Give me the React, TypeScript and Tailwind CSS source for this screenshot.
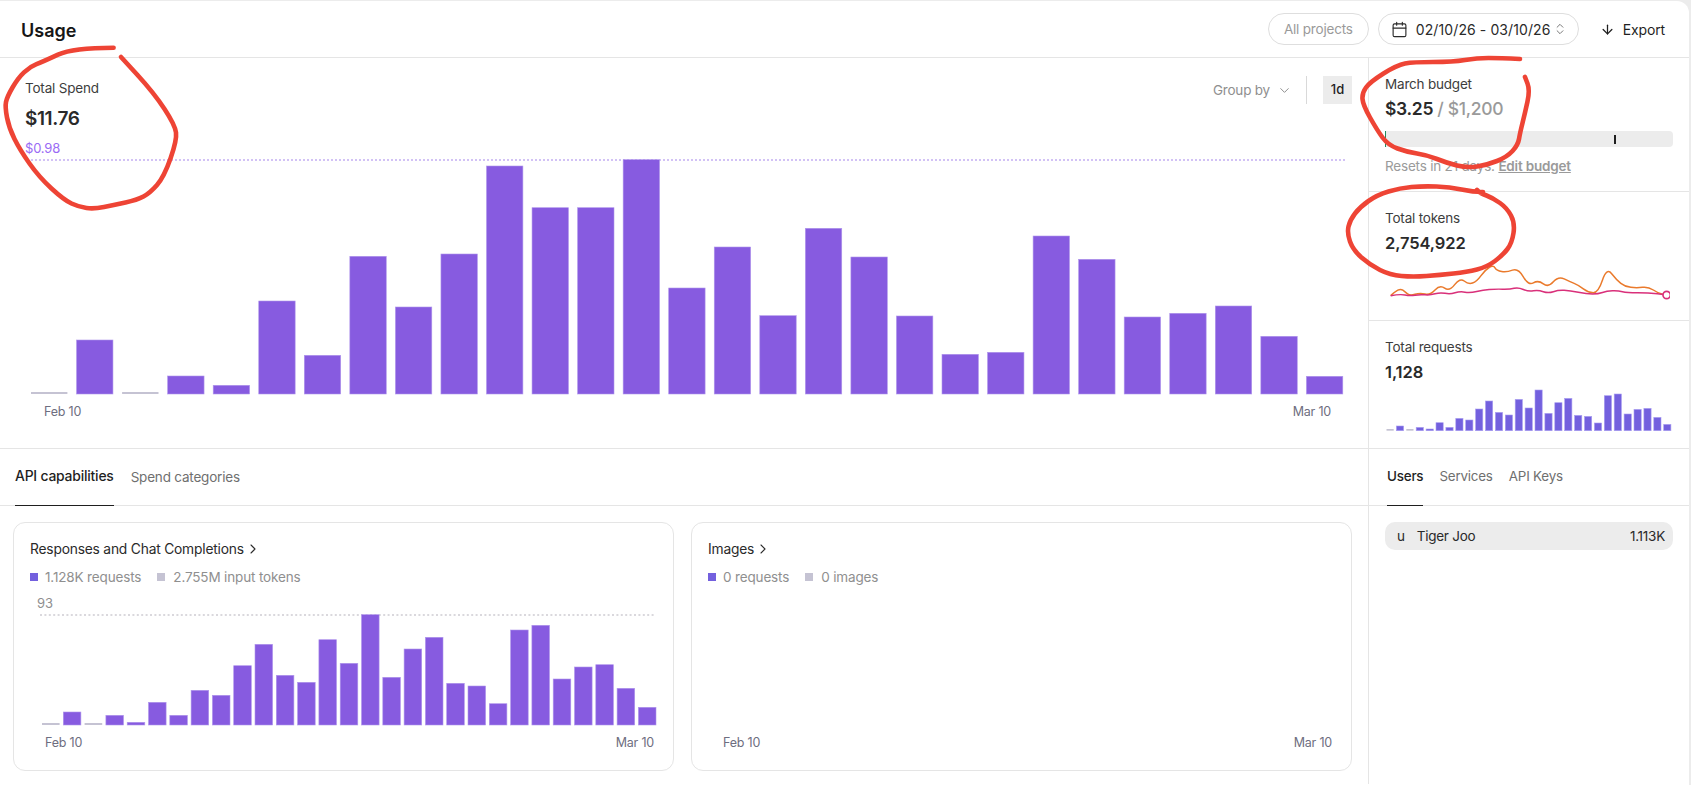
import { ArrowDown, Calendar, ChevronDown, ChevronRight, ChevronsUpDown } from "lucide-react";

const spendBars = [2, 54, 2, 18, 8.7, 93, 38.7, 137.7, 87, 140, 228, 186.3, 186.3, 234.3, 106, 147, 78.3, 165.7, 137, 78, 39.7, 41.7, 158, 134.7, 77, 80.7, 88, 57.7, 17.7];
const cardBars = [2, 13, 2, 9.7, 2.7, 22.7, 9.7, 34.7, 29.7, 59.3, 80.7, 49.7, 42.7, 85.3, 61.7, 110.3, 47.7, 76, 87.7, 41.7, 39, 21.3, 95, 99.7, 46, 58, 60.3, 36.7, 17.7];
const requestBars = [1.7, 4.7, 1.7, 3.3, 1.7, 8, 3.3, 12.3, 10.7, 21.7, 29.7, 18.3, 15.7, 31.3, 22.7, 40.7, 17.3, 28, 32.3, 15.3, 14.3, 7.7, 35, 36.7, 16.7, 21.3, 22.3, 13.3, 6.3];

const orangeLine: [number, number][] = [[152, 347], [165, 335], [182, 326], [195, 335], [210, 348], [240, 338], [270, 346], [300, 314], [328, 335], [360, 293], [385, 313], [410, 305], [435, 270], [460, 255], [470, 272], [500, 277], [535, 264], [565, 317], [595, 300], [625, 323], [655, 288], [690, 305], [715, 315], [745, 338], [775, 338], [800, 262], [830, 300], [855, 320], [890, 324], [925, 320], [955, 340], [980, 345]];
const pinkLine: [number, number][] = [[152, 347], [180, 342], [210, 348], [240, 343], [270, 346], [300, 337], [330, 343], [360, 334], [390, 339], [430, 330], [465, 327], [510, 328], [535, 322], [565, 335], [595, 330], [625, 340], [655, 330], [690, 332], [740, 342], [775, 342], [800, 333], [835, 332], [860, 338], [925, 338], [980, 345]];

// red pen marks on top of the screenshot, in page coordinates
const penSpend: [number, number][] = [[113.6, 47.7], [73, 47.7], [43, 61.7], [30, 66.7], [18, 78], [7, 97], [5, 107], [9, 128], [20, 150], [39, 177], [64, 200], [79, 207], [94, 209], [114, 205], [137, 200], [150, 193], [164, 177], [177, 140], [175, 125], [154, 93], [121, 57]];
const penBudget: [number, number][] = [[1520, 59], [1500, 58], [1477, 58], [1453, 62], [1413, 62], [1397, 65], [1370, 82], [1362, 93], [1363, 105], [1377, 130], [1388, 145], [1407, 152], [1427, 155], [1447, 163], [1467, 168], [1487, 165], [1507, 157], [1518, 145], [1520, 133], [1525, 113], [1530, 90], [1525, 77]];
const penTokens: [number, number][] = [[1483, 192], [1473, 192], [1450, 187], [1423, 186], [1400, 188], [1377, 195], [1360, 207], [1350, 220], [1347, 233], [1353, 250], [1370, 265], [1390, 275], [1413, 277], [1440, 275], [1467, 272], [1487, 267], [1503, 255], [1512, 243], [1515, 223], [1507, 208], [1493, 198], [1480, 193], [1477, 190]];

function smooth(points: [number, number][]) {
  let d = `M${points[0][0]} ${points[0][1]}`;
  for (let i = 1; i < points.length - 1; i++) {
    const mx = (points[i][0] + points[i + 1][0]) / 2;
    const my = (points[i][1] + points[i + 1][1]) / 2;
    d += ` Q${points[i][0]} ${points[i][1]} ${mx} ${my}`;
  }
  const last = points[points.length - 1];
  return `${d} L${last[0]} ${last[1]}`;
}

type BarsProps = {
  values: number[];
  x0: number;
  pitch: number;
  barWidth: number;
  baseline: number;
  color: string;
  edge: string;
};

function Bars({ values, x0, pitch, barWidth, baseline, color, edge }: BarsProps) {
  return (
    <>
      {values.map((v, i) => {
        const empty = i === 0 || i === 2;
        return (
          <rect
            key={i}
            x={x0 + i * pitch}
            y={baseline - v}
            width={barWidth}
            height={v}
            fill={empty ? "#c5c3d3" : color}
            stroke={empty ? "none" : edge}
            strokeWidth="0.6"
          />
        );
      })}
    </>
  );
}

function Legend({ first, second }: { first: string; second: string }) {
  return (
    <div className="mt-[10px] flex h-[18px] items-center text-[13.5px] tracking-[-0.15px] text-[#8f8f8f]">
      <span className="h-2 w-2 bg-[#7360de]" />
      <span className="ml-[7px]">{first}</span>
      <span className="ml-4 h-2 w-2 bg-[#c5c3d3]" />
      <span className="ml-2">{second}</span>
    </div>
  );
}

function CapabilityCard({ title, first, second, chart }: { title: string; first: string; second: string; chart?: boolean }) {
  return (
    <div className="h-[249px] w-[661px] rounded-xl border border-[#e5e5e5] px-4 pt-[17px]">
      <div className="flex h-[18px] items-center text-[13.8px] tracking-[-0.2px] text-[#2a2a2a]">
        {title}
        <ChevronRight className="ml-px h-4 w-4" strokeWidth={1.6} />
      </div>
      <Legend first={first} second={second} />
      <div className="mt-[9px] h-4 pl-[7px] text-[13px] leading-4 text-[#8f8f8f]">{chart ? "93" : ""}</div>
      <svg className="mt-[3px] block" width="630" height="112" viewBox="0 0 630 112">
        {chart && (
          <>
            <line x1="10" y1="1" x2="625" y2="1" stroke="#b5b2bb" strokeWidth="1.2" strokeDasharray="2 2.4" />
            <Bars values={cardBars} x0={12} pitch={21.3} barWidth={17.6} baseline={111} color="#875be0" edge="#b096ec" />
          </>
        )}
      </svg>
      <div className="mt-[9px] flex h-4 w-[630px] justify-between pl-[15px] pr-[6px] text-[12.5px] leading-4 tracking-[-0.2px] text-[#6e6e80]">
        <span>Feb 10</span>
        <span>Mar 10</span>
      </div>
    </div>
  );
}

function Tab({ label, active }: { label: string; active?: boolean }) {
  return (
    <div
      className={`-mb-px flex h-[57px] items-center border-b pb-px text-[13.4px] tracking-[-0.2px] ${
        active ? "border-[#1f1f1f] font-medium text-[#1f1f1f]" : "border-transparent text-[#6f6f6f]"
      }`}
    >
      {label}
    </div>
  );
}

export default function App() {
  return (
    <div className="relative h-[785px] w-[1691px] overflow-hidden bg-[#ececec] pr-[2px] pt-px font-['Inter',sans-serif]">
      <div className="h-[784px] rounded-tr-xl bg-white">
        {/* Header */}
        <div className="flex h-[57px] items-center justify-between border-b border-[#e5e5e5] pl-[21px] pr-6">
          <h1 className="pt-0.5 text-[18px] font-semibold text-[#161616]">Usage</h1>
          <div className="flex items-center">
            <div className="flex h-8 w-[101px] items-center justify-center rounded-full border border-[#dedede] text-[13.5px] tracking-[-0.2px] text-[#9a9a9a]">
              All projects
            </div>
            <div className="ml-[9px] flex h-8 w-[201px] items-center rounded-full border border-[#dedede] pl-[12px] text-[14px] tracking-[0.1px] text-[#2a2a2a]">
              <Calendar className="h-[17px] w-[17px]" strokeWidth={1.6} />
              <span className="ml-[8px]">02/10/26 - 03/10/26</span>
              <ChevronsUpDown className="ml-[2px] h-[14px] w-[14px] text-[#6f6f6f]" strokeWidth={1.6} />
            </div>
            <ArrowDown className="ml-[21px] h-[15px] w-[15px] text-[#1f1f1f]" strokeWidth={2} />
            <span className="ml-[8px] text-[14px] tracking-[-0.15px] text-[#1f1f1f]">Export</span>
          </div>
        </div>

        {/* Top row */}
        <div className="flex h-[391px] border-b border-[#e5e5e5]">
          <div className="w-[1369px] border-r border-[#e5e5e5]">
            <div className="flex items-start justify-between pl-[25px] pr-4 pt-[18px]">
              <div className="pt-[3px]">
                <div className="text-[13.5px] leading-[18px] tracking-[-0.2px] text-[#3d3d3d]">Total Spend</div>
                <div className="mt-2 text-[19px] font-semibold leading-7 tracking-[-0.4px] text-[#2a2a2a]">$11.76</div>
                <div className="mt-[7px] text-[13px] leading-4 tracking-[-0.2px] text-[#9a6bf5]">$0.98</div>
              </div>
              <div className="flex h-7 items-center">
                <span className="text-[13.5px] tracking-[-0.2px] text-[#8f8f8f]">Group by</span>
                <ChevronDown className="ml-[7px] h-[15px] w-[15px] text-[#8f8f8f]" strokeWidth={1.6} />
                <span className="ml-[14px] h-7 w-px bg-[#d9d9d9]" />
                <span className="ml-4 flex h-7 w-[29px] items-center justify-center bg-[#ececec] text-[13px] font-medium text-[#1f1f1f]">1d</span>
              </div>
            </div>
            <svg className="ml-[25px] mt-[3px] block" width="1325" height="236" viewBox="0 0 1325 236">
              <line x1="6" y1="1" x2="1322" y2="1" stroke="#c3aef2" strokeWidth="1.4" strokeDasharray="2 2" />
              <Bars values={spendBars} x0={6} pitch={45.55} barWidth={36.4} baseline={235} color="#875be0" edge="#b096ec" />
            </svg>
            <div className="mt-[9px] flex h-4 justify-between pl-11 pr-[37px] text-[12.5px] leading-4 tracking-[-0.2px] text-[#6e6e80]">
              <span>Feb 10</span>
              <span>Mar 10</span>
            </div>
          </div>

          {/* Side stats */}
          <div className="w-[320px]">
            <div className="h-[134px] border-b border-[#e5e5e5] px-4 pt-[17px]">
              <div className="text-[13.5px] leading-[18px] tracking-[-0.2px] text-[#3d3d3d]">March budget</div>
              <div className="mt-1 text-[17.5px] font-semibold leading-6 tracking-[-0.3px] text-[#2a2a2a]">
                $3.25 <span className="font-medium text-[#9a9a9a]">/ $1,200</span>
              </div>
              <div className="relative mt-[10px] h-4 rounded-r-[4px] bg-[#ececec]">
                <span className="absolute left-0 top-0 h-4 w-px bg-[#1f8a5c]" />
                <span className="absolute left-[229px] top-1 h-[9px] w-[2px] bg-[#1f1f1f]" />
              </div>
              <div className="mt-[10px] text-[13.5px] leading-[18px] tracking-[-0.2px] text-[#9a9a9a]">
                Resets in 21 days. <span className="font-semibold underline">Edit budget</span>
              </div>
            </div>
            <div className="h-[129px] border-b border-[#e5e5e5] px-4 pt-[17px]">
              <div className="text-[13.5px] leading-[18px] tracking-[-0.2px] text-[#3d3d3d]">Total tokens</div>
              <div className="mt-1 text-[16.5px] font-semibold leading-6 tracking-[-0.1px] text-[#2a2a2a]">2,754,922</div>
              <svg className="ml-[3px] mt-[5px] block" width="282" height="40" viewBox="144 240 846 120" fill="none">
                <path d={smooth(orangeLine)} stroke="#ea7a2c" strokeWidth="4.5" strokeLinejoin="round" />
                <path d={smooth(pinkLine)} stroke="#d9307a" strokeWidth="4.5" strokeLinejoin="round" />
                <circle cx="980" cy="345" r="11" fill="#fff" stroke="#d9307a" strokeWidth="5" />
              </svg>
            </div>
            <div className="px-4 pt-[17px]">
              <div className="text-[13.5px] leading-[18px] tracking-[-0.2px] text-[#3d3d3d]">Total requests</div>
              <div className="mt-1 text-[16.5px] font-semibold leading-6 tracking-[-0.1px] text-[#2a2a2a]">1,128</div>
              <svg className="block" width="288" height="48" viewBox="0 0 288 48">
                <Bars values={requestBars} x0={1.5} pitch={9.9} barWidth={7.2} baseline={46.7} color="#7360de" edge="#a99df0" />
              </svg>
            </div>
          </div>
        </div>

        {/* Bottom row */}
        <div className="flex">
          <div className="h-[335px] w-[1369px] border-r border-[#e5e5e5]">
            <div className="flex h-[57px] gap-[17px] border-b border-[#e5e5e5] pl-[15px] text-[13.9px]">
              <div className="-mb-px flex h-[57px] items-center border-b border-[#1f1f1f] pb-px font-medium tracking-[-0.2px] text-[#1f1f1f]">API capabilities</div>
              <div className="-mb-px flex h-[57px] items-center pb-px text-[13.5px] tracking-[-0.2px] text-[#6f6f6f]">Spend categories</div>
            </div>
            <div className="flex gap-[17px] pl-[13px] pt-4">
              <CapabilityCard title="Responses and Chat Completions" first="1.128K requests" second="2.755M input tokens" chart />
              <CapabilityCard title="Images" first="0 requests" second="0 images" />
            </div>
          </div>
          <div className="w-[320px]">
            <div className="flex h-[57px] gap-[16px] border-b border-[#e5e5e5] pl-[18px]">
              <Tab label="Users" active />
              <Tab label="Services" />
              <Tab label="API Keys" />
            </div>
            <div className="px-4 pt-4">
              <div className="flex h-7 items-center rounded-[10px] bg-[#ececec] pl-3 pr-2 text-[13.5px] tracking-[-0.25px] text-[#2a2a2a]">
                <span>u</span>
                <span className="ml-[12px]">Tiger Joo</span>
                <span className="ml-auto">1.113K</span>
              </div>
            </div>
          </div>
        </div>
      </div>

      {/* Pen marks */}
      <svg className="pointer-events-none absolute left-0 top-0" width="1691" height="785" viewBox="0 0 1691 785" fill="none">
        <path d={smooth(penSpend)} stroke="#ee4435" strokeWidth="4.6" strokeLinecap="round" strokeLinejoin="round" />
        <path d={smooth(penBudget)} stroke="#ee4435" strokeWidth="4.6" strokeLinecap="round" strokeLinejoin="round" />
        <path d={smooth(penTokens)} stroke="#ee4435" strokeWidth="4.6" strokeLinecap="round" strokeLinejoin="round" />
      </svg>
    </div>
  );
}
